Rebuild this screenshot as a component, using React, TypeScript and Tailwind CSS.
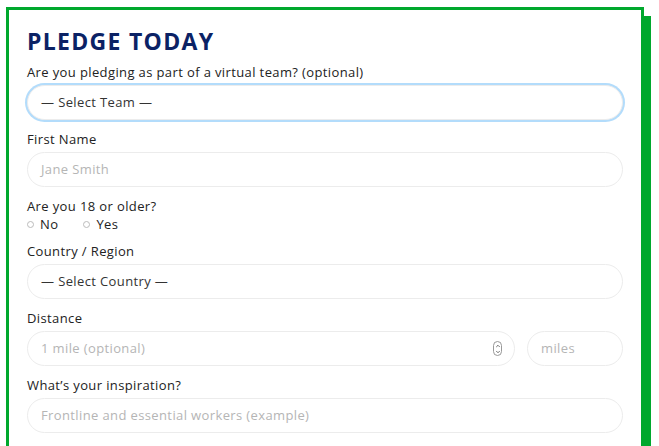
import { ChevronDown, ChevronUp } from 'lucide-react'

const FONT = { fontFamily: '"Open Sans", "Liberation Sans", sans-serif' }

function Label({ children, className = '' }: { children: React.ReactNode; className?: string }) {
  return <p className={`h-[20px] text-[13px] leading-[20px] tracking-[0.38px] text-[#222] ${className}`}>{children}</p>
}

function Field({ placeholder, value, className = '' }: { placeholder?: string; value?: string; className?: string }) {
  return (
    <div
      className={`flex h-[35px] items-center rounded-full border border-[#ececec] bg-white px-[13px] text-[13px] tracking-[0.38px] ${className}`}
    >
      {value ? <span className="text-[#333]">{value}</span> : <span className="text-[#b5b5b5]">{placeholder}</span>}
    </div>
  )
}

function Radio({ label }: { label: string }) {
  return (
    <label className="flex items-center gap-[6px] text-[13px] leading-[16px] tracking-[0.38px] text-[#222]">
      <span className="h-[7px] w-[7px] rounded-full border border-[#bbb]" />
      {label}
    </label>
  )
}

export default function App() {
  return (
    <div className="min-h-[446px] bg-white pl-[6px] pt-[7px]" style={FONT}>
      <div className="w-[638px] border-[3px] border-[#00a82d] bg-white px-[18px] pb-[40px] pt-[14px] shadow-[7px_9px_0_#00a82d]">
        <h1 className="text-[23px] font-bold leading-[34px] tracking-[1.3px] text-[#0b2265]">PLEDGE TODAY</h1>

        <Label className="mt-[4px] mb-[3px]">Are you pledging as part of a virtual team? (optional)</Label>
        <Field
          value="— Select Team —"
          className="border-[#b3dcfb] shadow-[0_0_0_2px_#b3dcfb]"
        />

        <Label className="mt-[9px] mb-[3px]">First Name</Label>
        <Field placeholder="Jane Smith" />

        <Label className="mt-[9px]">Are you 18 or older?</Label>
        <div className="flex h-[16px] items-center gap-[25px]">
          <Radio label="No" />
          <Radio label="Yes" />
        </div>

        <Label className="mt-[9px] mb-[3px]">Country / Region</Label>
        <Field value="— Select Country —" />

        <Label className="mt-[9px] mb-[3px]">Distance</Label>
        <div className="flex gap-[12px]">
          <div className="flex h-[35px] flex-1 items-center justify-between rounded-full border border-[#ececec] pl-[13px] pr-[12px] text-[13px] tracking-[0.38px] text-[#b5b5b5]">
            <span>1 mile (optional)</span>
            <span className="flex h-[15px] w-[9px] flex-col items-center justify-center rounded-full border border-[#999] text-[#444]">
              <ChevronUp size={6} strokeWidth={3} />
              <ChevronDown size={6} strokeWidth={3} />
            </span>
          </div>
          <Field placeholder="miles" className="w-[96px]" />
        </div>

        <Label className="mt-[9px] mb-[3px]">What’s your inspiration?</Label>
        <Field placeholder="Frontline and essential workers (example)" />
      </div>
    </div>
  )
}
